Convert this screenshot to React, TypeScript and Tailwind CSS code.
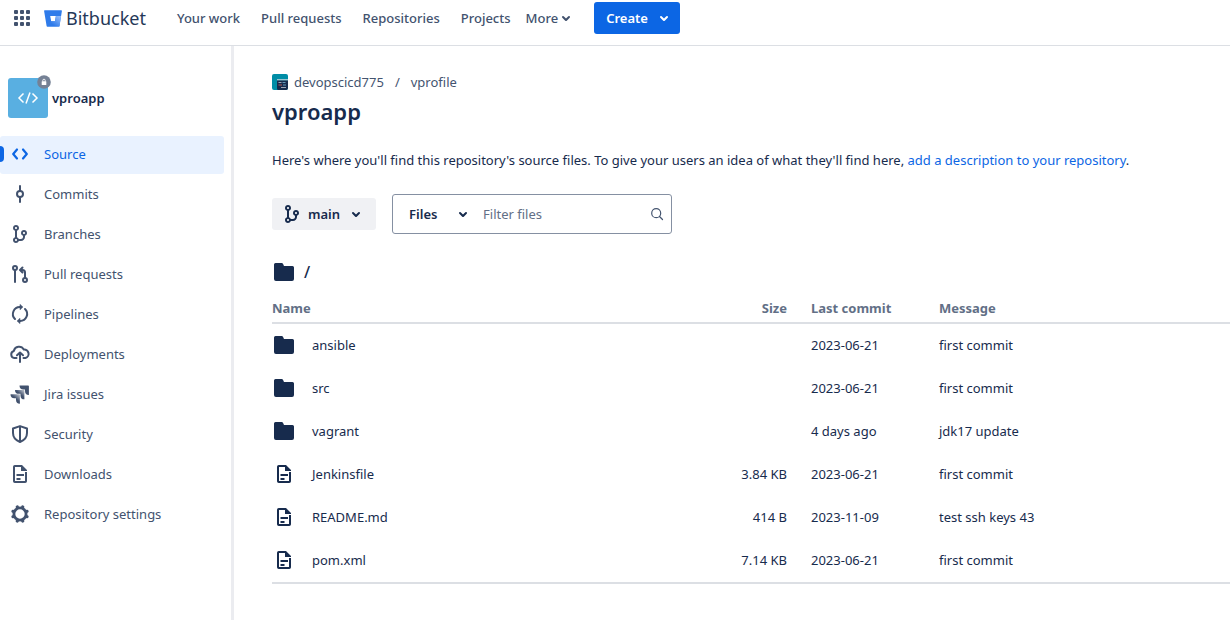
import type { ReactNode } from "react";

const FONT = "font-['Noto_Sans','Open_Sans',sans-serif]";

function Icon({ children, className = "" }: { children: ReactNode; className?: string }) {
  return (
    <svg viewBox="0 0 24 24" className={`size-6 shrink-0 ${className}`} fill="none" stroke="none" aria-hidden="true">
      {children}
    </svg>
  );
}

const BRANCH_PATH =
  "M19 11c0 1.3-.8 2.4-2 2.8V15c0 2.2-1.8 4-4 4h-2.2c-.4 1.2-1.5 2-2.8 2-1.7 0-3-1.3-3-3 0-1.3.8-2.4 2-2.8V8.8C5.8 8.4 5 7.3 5 6c0-1.7 1.3-3 3-3s3 1.3 3 3c0 1.3-.8 2.4-2 2.8v6.4c.9.3 1.5.9 1.8 1.8H13c1.1 0 2-.9 2-2v-1.2c-1.200-.4-2-1.5-2-2.8 0-1.7 1.300-3 3-3s3 1.300 3 3zM8 5c-.6 0-1 .4-1 1s.4 1 1 1 1-.4 1-1-.4-1-1-1zm8 7c.6 0 1-.4 1-1s-.4-1-1-1-1 .4-1 1 .4 1 1 1zm-8 7c.6 0 1-.4 1-1s-.4-1-1-1-1 .4-1 1 .4 1 1 1z";

const Branch = () => (
  <Icon>
    <path fill="currentColor" fillRule="evenodd" d={BRANCH_PATH} />
  </Icon>
);

const Chevron = ({ className = "" }: { className?: string }) => (
  <Icon className={className}>
    <path
      fill="currentColor"
      d="M8.292 10.293a1.009 1.009 0 000 1.419l2.939 2.965c.218.215.5.322.779.322s.556-.107.769-.322l2.93-2.955a1.01 1.01 0 000-1.419.987.987 0 00-1.406 0l-2.298 2.317-2.307-2.327a.99.99 0 00-1.406 0z"
    />
  </Icon>
);

const Folder = () => (
  <Icon>
    <path fill="currentColor" d="M2 4.500A1.500 1.500 0 013.500 3h6.200c.6 0 1.100.3 1.400.9L12 6h8.500A1.500 1.500 0 0122 7.500V19a2 2 0 01-2 2H4a2 2 0 01-2-2z" />
  </Icon>
);

const FilePage = () => (
  <Icon>
    <path
      stroke="currentColor"
      strokeWidth="2"
      d="M18 10v9.200a.8.8 0 01-.8.8H6.800a.8.8 0 01-.8-.8V4.800a.8.8 0 01.8-.8H13.500"
    />
    <path fill="currentColor" d="M13 3h1l5 5v1h-5.500a.5.5 0 01-.5-.5zM8.500 12h7.500v2H8.500zM8.500 16h4v2h-4z" />
  </Icon>
);

const Source = () => (
  <Icon>
    <path stroke="currentColor" strokeWidth="2.200" strokeLinecap="round" strokeLinejoin="round" d="M9 7.500L5.200 12 9 16.500M15 7.500l3.800 4.500-3.800 4.500" />
  </Icon>
);

const Commit = () => (
  <Icon>
    <circle cx="12" cy="12" r="3" stroke="currentColor" strokeWidth="2" />
    <path stroke="currentColor" strokeWidth="2" strokeLinecap="round" d="M12 4v4.500M12 15.500V20" />
  </Icon>
);

const PullRequest = () => (
  <Icon>
    <g stroke="currentColor" strokeWidth="2">
      <circle cx="7" cy="6" r="2" />
      <circle cx="17" cy="18" r="2" />
      <path strokeLinecap="round" d="M7 8.500V20" />
      <path strokeLinecap="round" strokeLinejoin="round" d="M17 15.500V10.500a2.500 2.500 0 00-2.500-2.500H12.500M14.500 5.500L12 8l2.500 2.500" />
    </g>
  </Icon>
);

const Pipelines = () => (
  <Icon>
    <g stroke="currentColor" strokeWidth="2" strokeLinecap="round">
      <path d="M7 17A7 7 0 0112 5M17 7A7 7 0 0112 19" />
    </g>
    <path fill="currentColor" stroke="currentColor" strokeWidth="0.600" strokeLinejoin="round" d="M12 2.400L14.900 5 12 7.700zM12 21.600L9.100 19 12 16.300z" />
  </Icon>
);

const Deploy = () => (
  <Icon>
    <g stroke="currentColor" strokeWidth="2" strokeLinecap="round" strokeLinejoin="round">
      <path d="M8.500 16H6.300A3.600 3.600 0 015.800 9 5.400 5.400 0 0115.800 7.600 4.300 4.300 0 0117.500 16h-2" />
      <path d="M12 20v-9M9 13.300l3-2.800 3 2.800" />
    </g>
  </Icon>
);

const Jira = () => (
  <Icon>
    <defs>
      <linearGradient id="jira-fade" x1="1" y1="0" x2="0.300" y2="0.800">
        <stop offset="0.150" stopColor="#42526e" stopOpacity="0.450" />
        <stop offset="0.600" stopColor="#42526e" />
      </linearGradient>
    </defs>
    <path fill="#42526e" d="M20 3.500h-8.500a3.900 3.900 0 003.900 3.900H17V9a3.900 3.900 0 003.900 3.900V4.300a.8.8 0 00-.9-.8z" />
    <path fill="url(#jira-fade)" d="M15.500 7.900H7a3.900 3.900 0 003.900 3.900h1.600v1.600a3.900 3.900 0 003.900 3.900V8.700a.8.8 0 00-.9-.8z" />
    <path fill="url(#jira-fade)" d="M11 12.300H2.500a3.900 3.900 0 003.900 3.900H8v1.600a3.900 3.900 0 003.900 3.900V13.100a.8.8 0 00-.9-.8z" />
  </Icon>
);

const Security = () => (
  <Icon>
    <path stroke="currentColor" strokeWidth="2" strokeLinejoin="round" d="M12 4.100l7 2.400v4.500c0 4-2.500 7.200-7 9-4.500-1.800-7-5-7-9V6.500zM12 4v16" />
  </Icon>
);

const Gear = () => (
  <Icon>
    <circle cx="12" cy="12" r="6.100" stroke="currentColor" strokeWidth="2.800" />
    <g stroke="currentColor" strokeWidth="3.200" strokeLinecap="round">
      <path d="M9.400 5.300l-.1-.3M14.600 5.300l.1-.3M9.400 18.700l-.1.300M14.600 18.700l.1.300M5.300 9.400l-.3-.1M5.300 14.600l-.3.100M18.700 9.400l.3-.1M18.700 14.600l.3.100" />
    </g>
  </Icon>
);

const NAV = [
  { label: "Source", icon: <Source />, active: true },
  { label: "Commits", icon: <Commit /> },
  { label: "Branches", icon: <Branch /> },
  { label: "Pull requests", icon: <PullRequest /> },
  { label: "Pipelines", icon: <Pipelines /> },
  { label: "Deployments", icon: <Deploy /> },
  { label: "Jira issues", icon: <Jira /> },
  { label: "Security", icon: <Security /> },
  { label: "Downloads", icon: <FilePage /> },
  { label: "Repository settings", icon: <Gear /> },
];

const FILES = [
  { name: "ansible", folder: true, size: "", date: "2023-06-21", message: "first commit" },
  { name: "src", folder: true, size: "", date: "2023-06-21", message: "first commit" },
  { name: "vagrant", folder: true, size: "", date: "4 days ago", message: "jdk17 update" },
  { name: "Jenkinsfile", size: "3.84 KB", date: "2023-06-21", message: "first commit" },
  { name: "README.md", size: "414 B", date: "2023-11-09", message: "test ssh keys 43" },
  { name: "pom.xml", size: "7.14 KB", date: "2023-06-21", message: "first commit" },
];

function TopBar() {
  return (
    <header className="flex h-[46px] items-start border-b border-[#dcdfe4] pl-3.5">
      <div className="flex h-9 items-center">
        <button aria-label="Switch product" className="text-[#42526e]">
          <svg viewBox="0 0 16 16" className="size-4" fill="currentColor" aria-hidden="true">
            {[0, 6, 12].map((y) => [0, 6, 12].map((x) => <rect key={`${x}-${y}`} x={x} y={y} width="4" height="4" rx="1" />))}
          </svg>
        </button>
        <a href="#home" className="ml-3.5 flex items-center gap-1 text-[#253858]">
          <svg viewBox="0 0 18 17" className="h-[17px] w-[18px]" aria-hidden="true">
            <defs>
              <linearGradient id="bucket-shade" x1="1" y1="0.200" x2="0.400" y2="0.800">
                <stop offset="0" stopColor="#8db8fa" />
                <stop offset="1" stopColor="#2f7bea" />
              </linearGradient>
            </defs>
            <path fill="#2f7bea" fillRule="evenodd" d="M.6.300h16.800a.5.5 0 01.5.6L15.500 16a.7.7 0 01-.7.600H3.400a.8.8 0 01-.8-.6L.1.900A.5.500 0 01.6.300zM7.200 11.200h3.800l.9-5.300H6.200z" />
            <path fill="url(#bucket-shade)" d="M17 5.900h-5.100l-.9 5.300H7.200L2.900 16.400c.1.100.3.200.5.200h11.400a.7.7 0 00.7-.6z" />
          </svg>
          <span className="text-[18px] leading-6">Bitbucket</span>
        </a>
        <nav className="ml-[31px] flex items-center gap-[21px] text-[13px] leading-5 font-medium text-[#42526e]">
          <a href="#work">Your work</a>
          <a href="#pulls">Pull requests</a>
          <a href="#repositories">Repositories</a>
          <a href="#projects">Projects</a>
          <button className="-ml-1.5 flex items-center">
            More
            <Chevron className="-ml-1" />
          </button>
        </nav>
      </div>
      <button className="mt-0.5 ml-4 flex h-8 items-center rounded-[3px] bg-[#0c66e4] pr-1 pl-3 text-[13px] leading-5 font-semibold text-white">
        Create
        <Chevron className="ml-1" />
      </button>
    </header>
  );
}

function Sidebar() {
  return (
    <aside className="w-[234px] shrink-0 border-r-3 border-[#ebecf0] pt-8">
      <div className="flex items-center gap-1 pl-2">
        <div className="relative flex size-10 items-center justify-center rounded-[3px] bg-[#59afe1]">
          <svg viewBox="0 0 22 14" className="h-3.5 w-[22px]" fill="none" stroke="#fff" strokeWidth="1.500" aria-hidden="true">
            <path d="M6.500 2.500L2 7l4.500 4.500M15.500 2.500L20 7l-4.500 4.500M13 1.500l-4 11" />
          </svg>
          <svg viewBox="0 0 14 14" className="absolute -top-[3px] -right-[3px] size-3.5" aria-hidden="true">
            <circle cx="7" cy="7" r="6.800" fill="#758195" />
            <rect x="4.700" y="6.300" width="4.600" height="3.700" rx="0.500" fill="#fff" />
            <path d="M5.800 6.500V5.400a1.200 1.200 0 012.400 0v1.100" fill="none" stroke="#fff" strokeWidth="0.900" />
          </svg>
        </div>
        <span className="text-[13px] leading-5 font-semibold text-[#172b4d]">vproapp</span>
      </div>
      <nav className="mt-[18px] flex flex-col gap-0.5 pr-[7px] text-[13px] leading-5 text-[#42526e]">
        {NAV.map((item) => (
          <a
            key={item.label}
            href={`#${item.label}`}
            className={`relative flex h-[38px] items-center gap-3 rounded-[3px] pb-0.5 pl-2 ${item.active ? "bg-[#e9f2ff] text-[#0c66e4]" : ""}`}
          >
            {item.active && <span className="absolute top-2.5 left-0 h-4 w-1 rounded-r bg-[#0c66e4]" />}
            {item.icon}
            {item.label}
          </a>
        ))}
      </nav>
    </aside>
  );
}

function FileTable() {
  const head = "border-b-2 border-[#dcdfe4] pt-1 font-bold";
  return (
    <table className="w-full table-fixed border-separate border-spacing-0 border-b-2 border-[#dcdfe4] text-left text-[13px] leading-5">
      <colgroup>
        <col />
        <col className="w-[115px]" />
        <col className="w-32" />
        <col className="w-[315px]" />
      </colgroup>
      <thead className="text-[#626f86]">
        <tr className="h-[34px]">
          <th className={head}>Name</th>
          <th className={`${head} text-right`}>Size</th>
          <th className={`${head} pl-6`}>Last commit</th>
          <th className={`${head} pl-6`}>Message</th>
        </tr>
      </thead>
      <tbody>
        {FILES.map((file) => (
          <tr key={file.name} className="h-[43px]">
            <td className="pb-0.5">
              <a href={`#${file.name}`} className="flex items-center gap-4">
                {file.folder ? <Folder /> : <FilePage />}
                {file.name}
              </a>
            </td>
            <td className="pb-0.5 text-right">{file.size}</td>
            <td className="pb-0.5 pl-6">{file.date}</td>
            <td className="pb-0.5 pl-6">{file.message}</td>
          </tr>
        ))}
      </tbody>
    </table>
  );
}

export default function App() {
  return (
    <div className={`${FONT} flex min-h-screen flex-col bg-white text-[#172b4d]`}>
      <TopBar />
      <div className="flex grow">
        <Sidebar />
        <main className="min-w-0 grow pt-[26px] pl-[38px] text-[13px] leading-5">
          <div className="flex items-center text-[#44546f]">
            <svg viewBox="0 0 16 16" className="size-4" aria-hidden="true">
              <rect width="16" height="16" rx="2" fill="#008da6" />
              <path fill="#dfe1e6" d="M5 5.300h11v1.200H5z" />
              <path fill="#172b4d" d="M5 6.500h11V14a2 2 0 01-2 2H6.500A1.500 1.500 0 015 14.500z" />
              <path stroke="#c1c7d0" strokeWidth="0.800" d="M6.500 8.500h3M9 13.500h5" />
              <path stroke="#de6b5b" strokeWidth="0.800" d="M6.500 11h3.500" />
              <path stroke="#79b8d8" strokeWidth="0.800" d="M11 11h3M10.500 8.500h3" />
            </svg>
            <a href="#workspace" className="ml-1.5">devopscicd775</a>
            <span className="mx-[11px]">/</span>
            <a href="#project">vprofile</a>
          </div>
          <h1 className="mt-[5px] text-[22px] leading-7 font-semibold">vproapp</h1>
          <p className="mt-[25px]">
            Here's where you'll find this repository's source files. To give your users an idea of what they'll find here,{" "}
            <a href="#description" className="text-[#0c66e4]">add a description to your repository</a>.
          </p>
          <div className="mt-6 flex items-center gap-4">
            <button className="flex h-8 items-center gap-1 rounded-[3px] bg-[#f0f1f4] px-2 font-semibold">
              <Branch />
              main
              <Chevron />
            </button>
            <div className="flex h-10 w-[280px] items-center rounded-[3px] border border-[#8590a2] pr-1.5">
              <div className="relative flex items-center">
                <select aria-label="Search in" className="h-8 w-[82px] appearance-none bg-transparent pl-4 font-semibold outline-none">
                  <option>Files</option>
                </select>
                <Chevron className="pointer-events-none absolute right-0" />
              </div>
              <input
                type="text"
                aria-label="Filter files"
                placeholder="Filter files"
                className="h-8 min-w-0 grow pl-2 outline-none placeholder:text-[#626f86]"
              />
              <svg viewBox="0 0 16 16" className="size-4 shrink-0 text-[#44546f]" fill="none" stroke="currentColor" strokeWidth="1.200" aria-hidden="true">
                <circle cx="7.200" cy="7.200" r="4.500" />
                <path strokeLinecap="round" d="M10.500 10.500l3 3" />
              </svg>
            </div>
          </div>
          <div className="mt-[26px] mb-1.5 flex items-center gap-2">
            <Folder />
            <span className="text-[16px] leading-6 font-medium">/</span>
          </div>
          <FileTable />
        </main>
      </div>
    </div>
  );
}
